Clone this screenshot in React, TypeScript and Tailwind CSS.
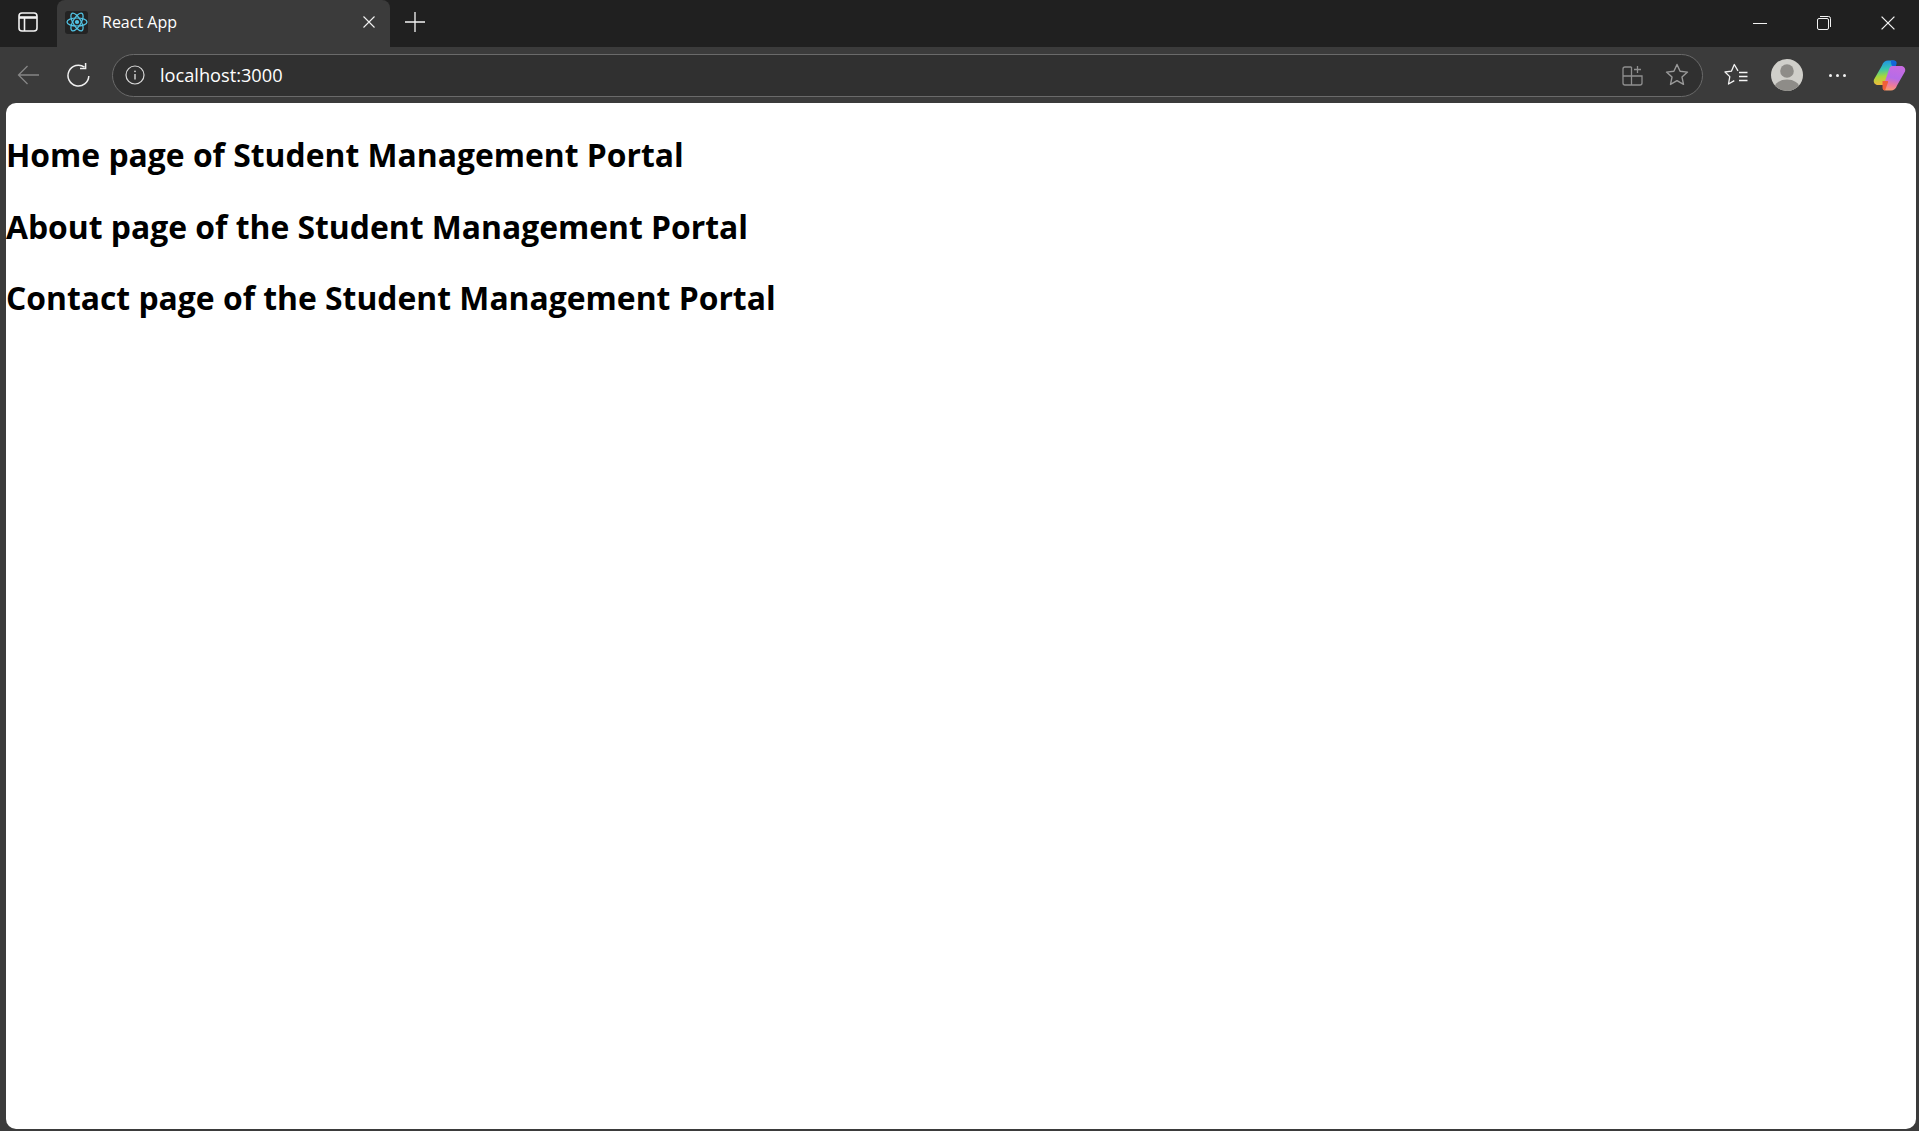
const uiFont = '"Open Sans", "Noto Sans", sans-serif';

function SidebarIcon() {
  return (
    <svg width="20" height="20" viewBox="0 0 20 20" fill="none" stroke="#f2f2f2" strokeWidth="1.6">
      <rect x="1" y="1" width="18" height="18" rx="3" />
      <path d="M1 5.500h18" strokeWidth="2.600" />
      <path d="M6.500 6v13" />
    </svg>
  );
}

function ReactLogo() {
  return (
    <div className="flex h-[23px] w-[23px] items-center justify-center rounded-[3px] bg-[#232323]">
      <svg width="22" height="20" viewBox="-11.5 -10.5 23 21" fill="none" stroke="#52c5e6" strokeWidth="1.3">
        <circle r="2.200" fill="#52c5e6" stroke="none" />
        <ellipse rx="10.5" ry="4.2" />
        <ellipse rx="10.5" ry="4.2" transform="rotate(60)" />
        <ellipse rx="10.5" ry="4.2" transform="rotate(120)" />
      </svg>
    </div>
  );
}

function CloseIcon({ size = 12, color = '#f2f2f2' }: { size?: number; color?: string }) {
  return (
    <svg width={size} height={size} viewBox="0 0 12 12" stroke={color} strokeWidth="1.1" fill="none">
      <path d="M.5.5l11 11M11.5.5l-11 11" />
    </svg>
  );
}

function BackIcon() {
  return (
    <svg width="23" height="20" viewBox="0 0 23 20" fill="none" stroke="#858585" strokeWidth="1.3">
      <path d="M22 10H1.5M10.5 1l-9 9 9 9" />
    </svg>
  );
}

function ReloadIcon() {
  return (
    <svg width="23" height="24" viewBox="0 0 23 24" fill="none" stroke="#f0f0f0" strokeWidth="1.5">
      <path d="M17.5 4.2A10.4 10.4 0 1 0 21.8 13" />
      <path d="M18.6 0v5.4h-5.6" />
    </svg>
  );
}

function InfoIcon() {
  return (
    <svg width="20" height="20" viewBox="0 0 20 20" fill="none" stroke="#d8d8d8" strokeWidth="1.2">
      <circle cx="10" cy="10" r="9" />
      <path d="M10 9v5.5" strokeWidth="1.4" />
      <circle cx="10" cy="6.3" r=".9" fill="#d8d8d8" stroke="none" />
    </svg>
  );
}

function SplitIcon() {
  return (
    <svg width="21" height="21" viewBox="0 0 21 21" fill="none" stroke="#8f8f8f" strokeWidth="1.3">
      <path d="M9.5 2H3a2 2 0 0 0-2 2v14a2 2 0 0 0 2 2h15a2 2 0 0 0 2-2v-7H1M9.5 2v18" />
      <path d="M15.5 1v7M12 4.5h7" />
    </svg>
  );
}

function StarIcon({ color }: { color: string }) {
  return (
    <svg width="24" height="23" viewBox="0 0 24 23" fill="none" stroke={color} strokeWidth="1.4" strokeLinejoin="round">
      <path d="M12 1.5l3.1 6.8 7.4.8-5.5 5 1.5 7.3-6.5-3.7-6.5 3.7 1.5-7.3-5.5-5 7.4-.8z" />
    </svg>
  );
}

function FavoritesIcon() {
  return (
    <svg width="24" height="23" viewBox="0 0 24 23" fill="none" stroke="#f4f4f4" strokeWidth="1.3" strokeLinejoin="round">
      <path d="M14 7.800L10.300 1.500 7.400 8.200 1 9l4.800 4.600L4.500 21l5.800-3.400" />
      <path d="M15 9.500h8.500M15 13.500h8.500M15 17.500h8.500" />
    </svg>
  );
}

function Avatar() {
  return (
    <svg width="32" height="32" viewBox="0 0 32 32">
      <defs>
        <clipPath id="avatar-clip">
          <circle cx="16" cy="16" r="16" />
        </clipPath>
      </defs>
      <g clipPath="url(#avatar-clip)">
        <rect width="32" height="32" fill="#d0cfca" />
        <circle cx="16" cy="12" r="6.8" fill="#8e8c88" />
        <ellipse cx="16" cy="29" rx="12.5" ry="8.5" fill="#8e8c88" />
      </g>
    </svg>
  );
}

function CopilotIcon() {
  return (
    <svg width="33" height="31" viewBox="0 0 33 31">
      <defs>
        <linearGradient id="cop-left" x1="0.35" y1="0" x2="0.45" y2="1">
          <stop offset="0" stopColor="#1f8fe8" />
          <stop offset="0.35" stopColor="#37c5b0" />
          <stop offset="0.65" stopColor="#a8d83a" />
          <stop offset="1" stopColor="#f6b73c" />
        </linearGradient>
        <linearGradient id="cop-right" x1="0.6" y1="0" x2="0.4" y2="1">
          <stop offset="0" stopColor="#c86be0" />
          <stop offset="0.5" stopColor="#b56ce8" />
          <stop offset="0.8" stopColor="#ee7a9c" />
          <stop offset="1" stopColor="#f79a70" />
        </linearGradient>
      </defs>
      <path d="M9 5.500C10 2 12.500.5 15 .5h5c2.500 0 3.500 1.500 3 3.500l-6.500 19c-.5 1.500-2 2-3.500 2H5C2 25 0 22.500 1 19.500z" fill="url(#cop-left)" />
      <path d="M18 .5h2.500c2.500 0 3.500 1.500 3 3.500l-1.500 5-3.500-4c-.5-2-.5-3.500-.5-4.500z" fill="#1466d8" />
      <path d="M24 25.500C23 29 20.500 30.500 18 30.500h-5c-2.500 0-3.500-1.500-3-3.500l6.500-19c.5-1.500 2-2 3.500-2h8c3 0 5 2.500 4 5.500z" fill="url(#cop-right)" />
      <path d="M9.500 21h4.500c1 0 1.500.5 1 1.500L12 30.500c-1.500 0-2.500-1-2.500-3z" fill="#f0603a" />
    </svg>
  );
}

function TitleBar() {
  return (
    <div className="flex h-[47px] shrink-0 items-center bg-[#202020]">
      <div className="mb-[3px] flex w-[57px] justify-center pr-[1px]">
        <SidebarIcon />
      </div>
      <div className="flex h-full w-[333px] items-center rounded-t-[8px] bg-[#3b3b3b] pb-[3px] pl-[8px] pr-[15px]">
        <ReactLogo />
        <span className="ml-[14px] flex-1 text-[16px] text-white">React App</span>
        <CloseIcon />
      </div>
      <div className="mb-[3px] ml-[15px] flex">
        <svg width="20" height="20" viewBox="0 0 20 20" stroke="#f4f4f4" strokeWidth="1.3">
          <path d="M10 0v20M0 10h20" />
        </svg>
      </div>
      <div className="mb-[2px] ml-auto flex items-center gap-[50px] pr-[24px]">
        <svg width="14" height="14" viewBox="0 0 14 14" stroke="#f2f2f2" strokeWidth="1">
          <path d="M0 7.500h14" />
        </svg>
        <svg width="14" height="14" viewBox="0 0 14 14" fill="none" stroke="#f2f2f2" strokeWidth="1">
          <rect x=".5" y="2.500" width="11" height="11" rx="1.500" />
          <path d="M3 .5h8.500a2 2 0 0 1 2 2V11" />
        </svg>
        <CloseIcon size={14} />
      </div>
    </div>
  );
}

function Toolbar() {
  return (
    <div className="flex h-[56px] shrink-0 items-center pl-[17px] pr-[13px]">
      <BackIcon />
      <div className="ml-[27px]">
        <ReloadIcon />
      </div>
      <div className="ml-[22px] flex h-[43px] flex-1 items-center rounded-full border border-[#6a6a6a] bg-[#303030] pl-[12px] pr-[13px]">
        <InfoIcon />
        <span className="ml-[15px] flex-1 pt-[1px] text-[18.2px] text-white">localhost:3000</span>
        <SplitIcon />
        <div className="mb-[2px] ml-[22px]">
          <StarIcon color="#9a9a9a" />
        </div>
      </div>
      <div className="mb-[2px] ml-[21px]">
        <FavoritesIcon />
      </div>
      <div className="ml-[23px]">
        <Avatar />
      </div>
      <div className="ml-[26px] flex gap-[4px]">
        <span className="h-[3px] w-[3px] rounded-full bg-[#f2f2f2]" />
        <span className="h-[3px] w-[3px] rounded-full bg-[#f2f2f2]" />
        <span className="h-[3px] w-[3px] rounded-full bg-[#f2f2f2]" />
      </div>
      <div className="ml-[27px]">
        <CopilotIcon />
      </div>
    </div>
  );
}

export default function App() {
  const pages = [
    'Home page of Student Management Portal',
    'About page of the Student Management Portal',
    'Contact page of the Student Management Portal',
  ];

  return (
    <div className="flex h-[1131px] flex-col overflow-hidden bg-[#3b3b3b]" style={{ fontFamily: uiFont }}>
      <TitleBar />
      <Toolbar />
      <main className="mb-[2px] ml-[6px] mr-[3px] flex-1 rounded-[10px] bg-white pt-[31px]">
        {pages.map(text => (
          <h2 key={text} className="mb-[29.5px] text-[31.85px] leading-[42px] font-bold text-black">
            {text}
          </h2>
        ))}
      </main>
    </div>
  );
}
